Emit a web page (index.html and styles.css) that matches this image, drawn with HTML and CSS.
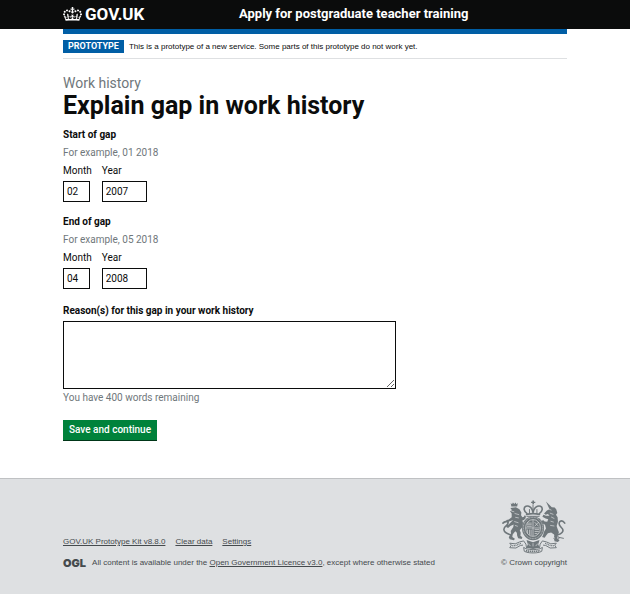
FILE: index.html
```html
<!DOCTYPE html>
<html lang="en">
<head>
<meta charset="utf-8">
<meta name="viewport" content="width=device-width, initial-scale=1">
<title>Explain gap in work history</title>
<link rel="stylesheet" href="styles.css">
</head>
<body>
<header class="header">
  <div class="container header-row">
    <a class="logo" href="#">
      <svg class="crown" viewBox="0 0 132 97" aria-hidden="true"><path fill="currentColor" fill-rule="evenodd" d="M25 30.2c3.5 1.5 7.7-.2 9.1-3.7 1.5-3.6-.2-7.8-3.9-9.2-3.6-1.4-7.6.3-9.1 3.9-1.4 3.5.3 7.5 3.9 9zM9 39.5c3.6 1.5 7.8-.2 9.2-3.7 1.5-3.6-.2-7.8-3.9-9.1-3.6-1.5-7.6.2-9.1 3.8-1.4 3.5.3 7.5 3.8 9zM4.4 57.2c3.5 1.5 7.7-.2 9.1-3.8 1.5-3.6-.2-7.7-3.9-9.1-3.5-1.5-7.6.3-9.1 3.8-1.4 3.5.3 7.6 3.9 9.1zm38.3-21.4c3.5 1.5 7.7-.2 9.1-3.8 1.5-3.6-.2-7.7-3.9-9.1-3.6-1.5-7.6.3-9.1 3.8-1.3 3.6.4 7.7 3.9 9.1zm64.4-5.6c-3.6 1.5-7.8-.2-9.1-3.7-1.5-3.6.2-7.8 3.8-9.2 3.6-1.4 7.7.3 9.2 3.9 1.3 3.5-.4 7.5-3.9 9zm15.9 9.3c-3.6 1.5-7.7-.2-9.1-3.7-1.5-3.6.2-7.8 3.7-9.1 3.6-1.5 7.7.2 9.2 3.8 1.5 3.5-.3 7.5-3.8 9zm4.7 17.7c-3.6 1.5-7.8-.2-9.2-3.8-1.5-3.6.2-7.7 3.9-9.1 3.6-1.5 7.7.3 9.2 3.8 1.3 3.5-.4 7.6-3.9 9.1zM89.3 35.8c-3.6 1.5-7.8-.2-9.2-3.8-1.4-3.6.2-7.7 3.9-9.1 3.6-1.5 7.7.3 9.2 3.8 1.4 3.6-.3 7.7-3.9 9.1zM69.7 17.7l8.9 4.7V9.3l-8.9 2.8c-.2-.3-.5-.6-.9-.9L72.4 0H59.6l3.5 11.2c-.3.3-.6.5-.9.9l-8.8-2.8v13.1l8.8-4.7c.3.3.6.7.9.9l-5 15.4v.1c-.2.8-.4 1.6-.4 2.4 0 4.1 3.1 7.5 7 8.1h.2c.3 0 .7.1 1 .1.4 0 .7 0 1-.1h.2c4-.6 7.1-4.1 7.1-8.1 0-.8-.1-1.7-.4-2.4V34l-5.1-15.4c.4-.2.7-.6 1-.9zM66 92.8c16.9 0 32.8 1.1 47.1 3.2 4-16.9 8.9-26.7 14-33.5l-9.6-3.4c1 4.9 1.1 7.2 0 10.2-1.5-1.4-3-4.3-4.2-8.7L108.6 76c2.8-2 5-3.2 7.5-3.3-4.4 9.4-10 11.9-13.6 11.2-4.3-.8-6.3-4.6-5.6-7.9 1-4.7 5.7-5.9 8-.5 4.3-8.7-3-11.4-7.6-8.8 7.1-7.2 7.9-13.5 2.1-21.1-8 6.1-8.1 12.3-4.5 20.8-4.7-5.4-12.1-2.5-9.5 6.2 3.4-5.2 7.9-2 7.2 3.1-.6 4.3-6.4 7.8-13.5 7.2-10.3-.9-10.9-8-11.2-13.8 2.5-.5 7.1 1.8 11 7.3L80.2 60c-4.1 4.4-8 5.3-12.3 5.4 1.4-4.4 8-11.6 8-11.6H55.5s6.4 7.2 7.9 11.6c-4.2-.1-8-1-12.3-5.4l1.4 16.4c3.9-5.5 8.5-7.7 10.9-7.3-.3 5.8-.9 12.8-11.1 13.8-7.2.6-12.9-2.9-13.5-7.2-.7-5 3.8-8.3 7.1-3.1 2.7-8.7-4.6-11.6-9.4-6.2 3.7-8.5 3.6-14.7-4.6-20.8-5.8 7.6-5 13.9 2.2 21.1-4.7-2.6-11.9.1-7.7 8.8 2.3-5.5 7.1-4.2 8.1.5.7 3.3-1.3 7.1-5.7 7.9-3.5.7-9-1.8-13.5-11.2 2.5.1 4.7 1.3 7.5 3.3l-4.7-15.4c-1.2 4.4-2.7 7.2-4.3 8.7-1.1-3-.9-5.3 0-10.2l-9.5 3.4c5 6.9 9.9 16.7 14 33.5 14.8-2.1 30.8-3.2 47.7-3.2z"/></svg>
      <span>GOV.UK</span>
    </a>
    <a class="service" href="#">Apply for postgraduate teacher training</a>
  </div>
</header>
<div class="container">
  <div class="phase">
    <strong class="tag">PROTOTYPE</strong>
    <span>This is a prototype of a new service. Some parts of this prototype do not work yet.</span>
  </div>
  <main class="main">
    <h1 class="heading"><span class="caption">Work history</span>Explain gap in work history</h1>
    <form>
      <fieldset class="group">
        <legend class="legend">Start of gap</legend>
        <p class="hint">For example, 01 2018</p>
        <div class="dates">
          <div><label class="label" for="start-month">Month</label><input class="input month" id="start-month" type="text" value="02"></div>
          <div><label class="label" for="start-year">Year</label><input class="input year" id="start-year" type="text" value="2007"></div>
        </div>
      </fieldset>
      <fieldset class="group">
        <legend class="legend">End of gap</legend>
        <p class="hint">For example, 05 2018</p>
        <div class="dates">
          <div><label class="label" for="end-month">Month</label><input class="input month" id="end-month" type="text" value="04"></div>
          <div><label class="label" for="end-year">Year</label><input class="input year" id="end-year" type="text" value="2008"></div>
        </div>
      </fieldset>
      <div class="reason">
        <label class="legend" for="reason">Reason(s) for this gap in your work history</label>
        <textarea class="textarea" id="reason"></textarea>
        <p class="count">You have 400 words remaining</p>
      </div>
      <button class="button" type="submit">Save and continue</button>
    </form>
  </main>
</div>
<footer class="footer">
  <div class="container footer-row">
    <div>
      <nav class="links"><a href="#">GOV.UK Prototype Kit v8.8.0</a><a href="#">Clear data</a><a href="#">Settings</a></nav>
      <div class="licence"><span class="ogl">OGL</span><span>All content is available under the <a href="#">Open Government Licence v3.0</a>, except where otherwise stated</span></div>
    </div>
    <a class="copyright" href="#">
      <svg class="arms" viewBox="26 26 204 164" aria-hidden="true">
        <g fill="currentColor">
          <path d="M123 26h5v4h4v4h-4v4h-5v-4h-4v-4h4z"/>
          <path d="M56 34l4 4 3-6 4 5 4-5 3 6 4-4-2 11H58z"/>
          <path d="M55 49l17-2 11 6 6 10-1 9 4 6 5-2 2-4 4 2-1 7-5 5-5 2 2 7-2 14-8 9 3 8-1 9 6 5-2 5-11-2-3-8-1-9-5-5-8 10-1 8 8 5-3 5-13-3-3-6 7-13-1-7 8-12 1-8-10 5-7 6-6-3 1-6 6-1 9-9 6-6-13 5-4 4-6-3 2-6 7-1 9-7v-12l-5-7 6-3z"/>
          <path d="M165 29l18 18 9 1 5 6 3 11-4 5 5 8 1 14-4 13 3 9 4 10-5 13 1 8 6 4-5 5-11-2v-16l-1-5-9-6-10 2-6 8-4 6-8-2 3-6 3-10 6-10-3-12-7-4-4-7 5-4 5 5 8 1 3-8-8-2-10-6 3-6 8 3 11 0-5-5-7 2-5-4 9-9 8-4z"/>
        </g>
        <g fill="none" stroke="currentColor" stroke-linecap="round">
          <path stroke-width="5" d="M58 133c-9-3-24-6-23-18s14-11 13-21c-2-5-11-3-16 2M202 132c10-3 19-10 14-18s-16-13-8-23c5-3 11-1 15 5"/>
          <path stroke-width="5" d="M106 66c-9-5-12-18-3-22 9-3 20 4 22 20 2-16 14-23 23-20 9 4 6 17-3 22"/>
          <path stroke-width="5" d="M105 69c12-3 28-3 40 0"/>
          <path stroke-width="3" d="M106 75h38M125 40v25M114 54v11M137 54v11"/>
          <path stroke-width="3" d="M191 137c5-5 16 0 14 6s-11 7-16 1M205 140l14 3"/>
        </g>
        <ellipse cx="125" cy="112" rx="34" ry="37" fill="currentColor"/>
        <g class="knockout" fill="none" stroke-width="2">
          <ellipse cx="125" cy="111" rx="30" ry="33" stroke-dasharray="3 2"/>
          <ellipse cx="125" cy="111" rx="23" ry="26"/>
          <path d="M103 111h44M125 86v50M107 96h14M106 101h15M106 106h15M130 93l12 13m0-13l-12 13M108 116v12M114 116v16M119 116v18M130 116h14M130 122h13M130 128h9"/>
          <path d="M58 59l9 2M68 66l14 4M70 78l11 2M67 91l13 4M69 103l9 3M175 53l7 3M177 65l11 4M181 77l10 5M179 90l10 3M178 103l13 2"/>
        </g>
        <g fill="none" stroke="currentColor" stroke-linejoin="round">
          <path stroke-width="3" d="M53 158l17 2 14-6 12-3 7 10 2 12M94 164l-8 1-14 8-19-1 5-8-5-6M197 158l-17 2-14-6-12-3-7 10-2 12M156 164l8 1 14 8 19-1-5-8 5-6"/>
          <path stroke-width="4" stroke-dasharray="3 2" d="M61 166l12-1 15-7M189 166l-12-1-15-7"/>
          <path stroke-width="3" d="M96 171l7 4c14 4 30 4 44 0l7-4-2 12-7 3c-12 3-28 3-40 0l-7-3z"/>
          <path stroke-width="5" stroke-dasharray="4 2" d="M103 181c14 3 30 3 44 0"/>
        </g>
        <path fill="currentColor" d="M105 148l20 7 20-7-4 14 5 10-21 4-21-4 5-10z"/>
        <path class="knockout" fill="none" stroke-width="2" d="M110 159l7 8M140 159l-7 8M125 158v10"/>
      </svg>
      <span>© Crown copyright</span>
    </a>
  </div>
</footer>
</body>
</html>
```
FILE: styles.css
```css
* { box-sizing: border-box; }
body {
  margin: 0;
  min-height: 100vh;
  display: flex;
  flex-direction: column;
  background: #fff;
  color: #0b0c0c;
  font: 10px/14px Roboto, "Liberation Sans", sans-serif;
}
.container { width: 80%; margin: 0 auto; }
h1, p, fieldset { margin: 0; padding: 0; border: 0; }
legend { padding: 0; }

.header { background: #0b0c0c; }
.header-row { display: grid; grid-template-columns: 176px 1fr; align-items: center; height: 29px; padding-bottom: 2px; }
.header a { color: #fff; text-decoration: none; font-weight: 700; }
.logo { display: flex; align-items: center; gap: 3px; font-size: 17px; }
.crown { width: 19px; height: 14px; }
.service { font-size: 13px; }

.phase { display: flex; align-items: center; gap: 5px; height: 30px; padding-top: 1px; border-top: 5px solid #005ea5; border-bottom: 1px solid #dee0e2; font: 8px/14px "Liberation Sans", Arial, sans-serif; }
.tag { padding: 0 5px; background: #005ea5; color: #fff; font: 700 9px/13px Roboto, sans-serif; }

.main { padding: 17px 0 38px; }
.heading { margin-bottom: 8px; font-size: 25px; line-height: 29px; }
.caption { display: block; color: #6f777b; font-size: 14px; font-weight: 400; line-height: 15px; }
.group { margin-bottom: 13px; }
.reason { margin: 15px 0; }
.legend { display: block; font-weight: 700; }
.hint { margin-top: 4px; color: #6f777b; }
.dates { display: flex; gap: 10px; margin-top: 4px; }
.label { display: block; margin-bottom: 3px; }
.input, .textarea { display: block; border: 1px solid #0b0c0c; border-radius: 0; background: #fff; color: inherit; font: inherit; padding: 2px 3px; }
.input { height: 21px; }
.month { width: 27px; }
.year { width: 45px; }
.textarea { width: 66%; height: 68px; margin-top: 3px; resize: vertical; }
.count { margin-top: 2px; color: #6f777b; }
.button { padding: 3px 6px; border: 0; background: #00823b; box-shadow: 0 1px #003618; color: #fff; font: inherit; font-weight: 500; }

.footer { flex: 1; border-top: 1px solid #bfc1c3; background: #dee0e2; color: #454a4d; font: 8px/14px "Liberation Sans", Arial, sans-serif; }
.footer a { color: inherit; }
.footer-row { display: flex; justify-content: space-between; align-items: flex-end; padding: 20px 0 24px; }
.links { display: flex; gap: 10px; margin-bottom: 7px; }
.licence { display: flex; align-items: center; gap: 6px; }
.ogl { font: 900 11px/14px Inter, Roboto, sans-serif; }
.copyright { display: flex; flex-direction: column; align-items: center; gap: 1px; }
.footer .copyright { text-decoration: none; }
.arms { width: 66px; height: 56px; color: #6f777b; }
.knockout { stroke: #dee0e2; }
```
